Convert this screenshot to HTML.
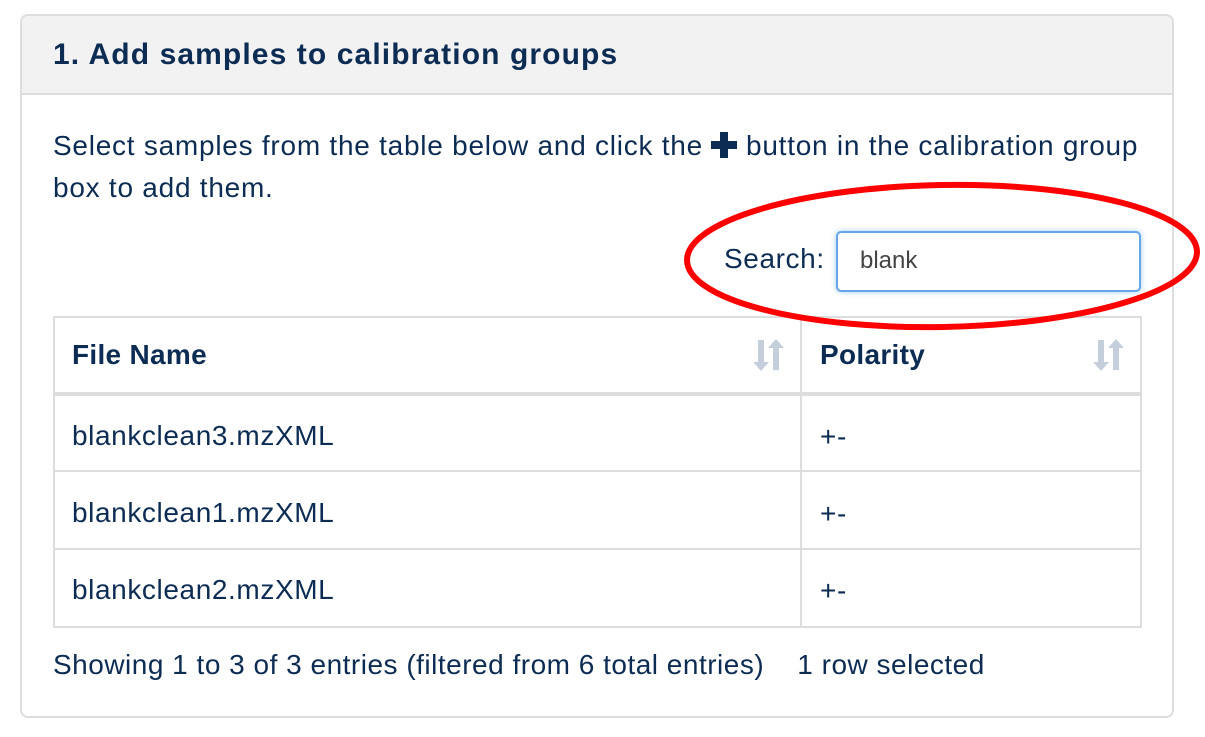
<!DOCTYPE html>
<html><head><style>
body{margin:0;width:1205px;height:737px;background:#fff;font-family:"Liberation Sans",Arial,sans-serif;color:#0d2c54;position:relative;overflow:hidden}
.a{position:absolute;white-space:nowrap}
.panel{position:absolute;left:20px;top:14px;width:1154px;height:704px;border:2px solid #ddd;border-radius:8px;box-sizing:border-box;overflow:hidden}
.hdr{position:absolute;left:0;top:0;right:0;height:77px;background:#f2f2f2;border-bottom:2px solid #ddd}
.t{font-size:28px;letter-spacing:0.6px}
.line{position:absolute;background:#ddd}
</style></head><body>
<div class="panel"><div class="hdr"></div></div>
<div class="a" style="left:53px;top:38px;font-size:30px;font-weight:bold;letter-spacing:1.1px">1. Add samples to calibration groups</div>
<div class="a t" style="left:53px;top:130px;letter-spacing:0.75px">Select samples from the table below and click the <span style="display:inline-block;width:26px;height:26px;position:relative;vertical-align:-3px"><span style="position:absolute;left:9px;top:0;width:8px;height:26px;background:#0d2c54"></span><span style="position:absolute;left:0;top:9px;width:26px;height:8px;background:#0d2c54"></span></span> button in the calibration group</div>
<div class="a t" style="left:53px;top:172px;letter-spacing:0.75px">box to add them.</div>
<div class="a t" style="left:724px;top:243px">Search:</div>
<div class="a" style="left:836px;top:231px;width:305px;height:61px;box-sizing:border-box;border:2px solid #66a6e8;border-radius:5px;box-shadow:0 0 6px rgba(102,175,233,.6);background:#fff"></div>
<div class="a" style="left:860px;top:247px;font-size:24px;color:#444">blank</div>
<div class="a" style="left:53px;top:316px;width:1089px;height:312px;border:2px solid #ddd;box-sizing:border-box"></div>
<div class="line" style="left:800px;top:316px;width:2px;height:312px"></div>
<div class="line" style="left:53px;top:392px;width:1089px;height:4px"></div>
<div class="line" style="left:53px;top:470px;width:1089px;height:2px"></div>
<div class="line" style="left:53px;top:548px;width:1089px;height:2px"></div>
<div class="a t" style="left:72px;top:339px;font-weight:bold;letter-spacing:0.3px">File Name</div>
<div class="a t" style="left:820px;top:339px;font-weight:bold;letter-spacing:0.3px">Polarity</div>
<svg class="a" style="left:754px;top:338px" width="30" height="34" viewBox="0 0 30 34" fill="#c5cfdb"><path d="M4 2h6v22h5l-8 9-8-9h5z"/><path d="M17 10l8-9 8 9h-5v22h-6V10z" transform="translate(-3 0)"/></svg>
<svg class="a" style="left:1094px;top:338px" width="30" height="34" viewBox="0 0 30 34" fill="#c5cfdb"><path d="M4 2h6v22h5l-8 9-8-9h5z"/><path d="M17 10l8-9 8 9h-5v22h-6V10z" transform="translate(-3 0)"/></svg>
<div class="a t" style="left:72px;top:420px">blankclean3.mzXML</div>
<div class="a t" style="left:820px;top:421px">+-</div>
<div class="a t" style="left:72px;top:497px">blankclean1.mzXML</div>
<div class="a t" style="left:820px;top:498px">+-</div>
<div class="a t" style="left:72px;top:574px">blankclean2.mzXML</div>
<div class="a t" style="left:820px;top:575px">+-</div>
<div class="a t" style="left:53px;top:649px;letter-spacing:0.5px">Showing 1 to 3 of 3 entries (filtered from 6 total entries)&nbsp;&nbsp;&nbsp;&nbsp;1 row selected</div>
<svg class="a" style="left:0;top:0" width="1205" height="737"><ellipse cx="942" cy="256" rx="255" ry="71" fill="none" stroke="#f00" stroke-width="6" transform="rotate(-1 942 256)"/></svg>
</body></html>
